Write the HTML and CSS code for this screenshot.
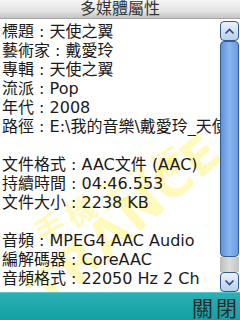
FILE: index.html
```html
<!DOCTYPE html>
<html lang="zh-Hant">
<head>
  <meta charset="UTF-8">
  <meta name="viewport" content="width=device-width, initial-scale=1.0">
  <title>多媒體屬性</title>
  <link rel="stylesheet" href="styles.css">
</head>
<body>
  <div class="screen">
    <div class="titlebar">多媒體屬性</div>

    <div class="panel">
      <div class="watermark">
        <span class="wm-a">手機王3版</span>
        <span class="wm-b">TRANCE</span>
      </div>

      <div class="props">
        <div class="row">標題 : 天使之翼</div>
        <div class="row">藝術家 : 戴愛玲</div>
        <div class="row">專輯 : 天使之翼</div>
        <div class="row">流派 : Pop</div>
        <div class="row">年代 : 2008</div>
        <div class="row">路徑 : E:\我的音樂\戴愛玲_天使之翼</div>
        <div class="row"></div>
        <div class="row">文件格式 : AAC文件 (AAC)</div>
        <div class="row">持續時間 : 04:46.553</div>
        <div class="row">文件大小 : 2238 KB</div>
        <div class="row"></div>
        <div class="row">音頻 : MPEG4 AAC Audio</div>
        <div class="row">編解碼器 : CoreAAC</div>
        <div class="row">音頻格式 : 22050 Hz 2 Ch</div>
      </div>

      <div class="scrollbar">
        <div class="sb-btn">
          <svg width="11" height="7" viewBox="0 0 11 7"><path d="M1.5 5.5 L5.5 1.5 L9.5 5.5" fill="none" stroke="#2a4a78" stroke-width="1.6"/></svg>
        </div>
        <div class="sb-thumb"></div>
        <div class="sb-track"></div>
        <div class="sb-btn">
          <svg width="11" height="7" viewBox="0 0 11 7"><path d="M1.5 1.5 L5.5 5.5 L9.5 1.5" fill="none" stroke="#2a4a78" stroke-width="1.6"/></svg>
        </div>
      </div>
    </div>

    <div class="softkeys">
      <span class="softkey">關閉</span>
    </div>
  </div>
</body>
</html>
```

FILE: styles.css
```css
body {
  margin: 0;
  font-family: "DejaVu Sans", "Noto Sans CJK TC", sans-serif;
}
.screen {
  width: 240px;
  height: 320px;
  display: flex;
  flex-direction: column;
  overflow: hidden;
  background: #fff;
}
.titlebar {
  height: 18px;
  line-height: 18px;
  text-align: center;
  font-size: 16px;
  color: #333;
  background: linear-gradient(to bottom, #f6f6f6, #e4e4e4 60%, #c4c4c4);
  border-bottom: 1px solid #a8a8a8;
}
.panel {
  flex: 1;
  display: flex;
  position: relative;
  overflow: hidden;
}
.props {
  flex: 1;
  min-width: 0;
  position: relative;
  padding: 3px 0 0 2px;
  font-size: 16px;
  color: #1a1a1a;
}
.row {
  height: 19px;
  line-height: 19px;
  white-space: nowrap;
  overflow: hidden;
}
.scrollbar {
  width: 19px;
  margin-right: 1px;
  padding-top: 2px;
  display: flex;
  flex-direction: column;
  position: relative;
}
.sb-btn {
  height: 18px;
  border: 1px solid #335a8c;
  border-radius: 4px;
  background: linear-gradient(to bottom, #eaf2fc, #b8cfec);
  display: flex;
  align-items: center;
  justify-content: center;
}
.sb-thumb {
  height: 214px;
  border: 1px solid #2f5d9a;
  border-radius: 4px;
  background: linear-gradient(to right, #5f92d8, #8ab6ef 50%, #6a9ce0);
}
.sb-track {
  flex: 1;
  background: linear-gradient(to right, #bdbdbd, #dcdcdc 50%, #c4c4c4);
}
.softkeys {
  height: 27px;
  display: flex;
  justify-content: flex-end;
  align-items: center;
  background: linear-gradient(to bottom, #2bb0b4, #14a0a4);
  border-top: 1px solid #5cc8cc;
}
.softkey {
  font-size: 21px;
  color: #2a2a2a;
  letter-spacing: 3px;
}
.watermark {
  position: absolute;
  inset: 0;
  pointer-events: none;
  color: rgba(255, 240, 60, 0.35);
  font-weight: bold;
}
.wm-a,
.wm-b {
  position: absolute;
  white-space: nowrap;
  line-height: 1;
}
.wm-a {
  left: 112px;
  top: 176px;
  font-size: 30px;
  letter-spacing: 6px;
  transform: translate(-50%, -50%) rotate(-29deg);
}
.wm-b {
  left: 126px;
  top: 202px;
  font-size: 50px;
  letter-spacing: 2px;
  transform: translate(-50%, -50%) rotate(-41deg);
}
```
